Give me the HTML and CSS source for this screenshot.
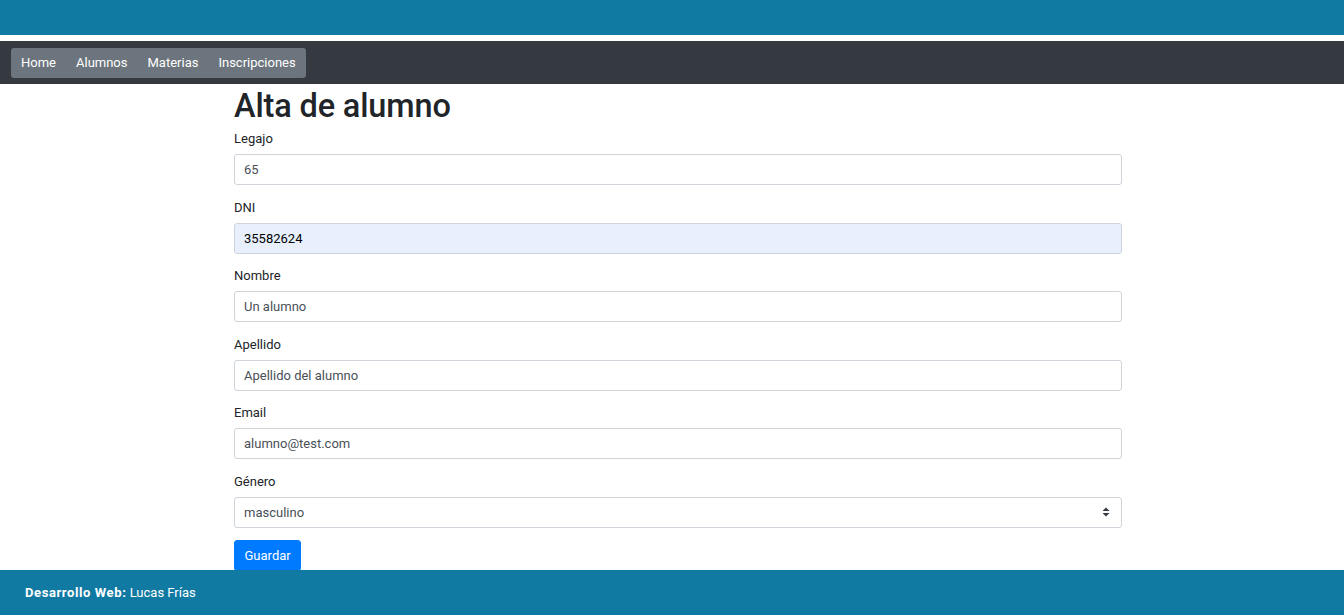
FILE: index.html
```html
<!DOCTYPE html>
<html lang="es">
<head>
<meta charset="utf-8">
<title>Alta de alumno</title>
<link rel="stylesheet" href="styles.css">
</head>
<body>
<header class="topbar"></header>
<nav class="navbar">
  <ul class="nav-pill">
    <li><a href="#">Home</a></li>
    <li><a href="#">Alumnos</a></li>
    <li><a href="#">Materias</a></li>
    <li><a href="#">Inscripciones</a></li>
  </ul>
</nav>
<main class="container">
  <h1 class="title">Alta de alumno</h1>
  <form class="form">
    <div class="group">
      <label class="label">Legajo</label>
      <div class="control">65</div>
    </div>
    <div class="group">
      <label class="label">DNI</label>
      <div class="control autofill">35582624</div>
    </div>
    <div class="group">
      <label class="label">Nombre</label>
      <div class="control">Un alumno</div>
    </div>
    <div class="group">
      <label class="label">Apellido</label>
      <div class="control">Apellido del alumno</div>
    </div>
    <div class="group">
      <label class="label">Email</label>
      <div class="control">alumno@test.com</div>
    </div>
    <div class="group last">
      <label class="label">Género</label>
      <div class="control select">
        <span>masculino</span>
        <svg class="caret" width="8" height="10" viewBox="0 0 8 10"><path d="M4 0.5L7.5 4H0.5Z M4 9.5L7.5 6H0.5Z" fill="#343a40"/></svg>
      </div>
    </div>
    <button type="button" class="btn">Guardar</button>
  </form>
</main>
<footer class="footer"><strong>Desarrollo Web:</strong> Lucas Frías</footer>
</body>
</html>
```
FILE: styles.css
```css
* { box-sizing: border-box; }
html, body { margin: 0; padding: 0; }
body {
  font-family: Roboto, "Noto Sans", sans-serif;
  font-size: 13px;
  color: #212529;
  background: #fff;
}
.topbar {
  height: 35px;
  background: #117aa3;
  margin-bottom: 6px;
}
.navbar {
  height: 43px;
  background: #343a40;
  padding: 7px 11px;
}
.nav-pill {
  display: inline-flex;
  list-style: none;
  margin: 0;
  padding: 0;
  height: 30px;
  align-items: center;
  background: #6c757d;
  border-radius: 3px;
}
.nav-pill a {
  display: block;
  color: #fff;
  text-decoration: none;
  font-size: 13px;
  padding: 0 10px;
  line-height: 30px;
}
.container {
  width: 900px;
  margin: 0 auto;
  padding-left: 12px;
}
.title {
  margin: 2px 0 4px;
  font-size: 32.5px;
  font-weight: 500;
  line-height: 40px;
  color: #212529;
  letter-spacing: -0.15px;
}
.group {
  margin-bottom: 13.6px;
}
.group.last {
  margin-bottom: 12px;
}
.label {
  display: block;
  line-height: 18px;
  margin-bottom: 6px;
  font-size: 13px;
}
.control {
  height: 31px;
  border: 1px solid #ced4da;
  border-radius: 3px;
  padding: 0 9px;
  display: flex;
  align-items: center;
  color: #495057;
  font-size: 13px;
  background: #fff;
}
.control.autofill {
  background: #e8f0fe;
  color: #000;
}
.control.select {
  justify-content: space-between;
}
.caret { margin-right: 2px; }
.btn {
  font-family: inherit;
  font-size: 13px;
  color: #fff;
  background: #007bff;
  border: 1px solid #007bff;
  border-radius: 3px;
  height: 31px;
  padding: 0 9.5px;
  margin-top: 0;
}
.footer {
  position: fixed;
  left: 0;
  right: 0;
  bottom: 0;
  height: 45px;
  background: #117aa3;
  color: #fff;
  padding: 0 25px;
  display: flex;
  align-items: center;
  font-size: 13px;
  white-space: pre;
}
.footer strong {
  font-weight: 700;
  letter-spacing: 0.6px;
}
```
